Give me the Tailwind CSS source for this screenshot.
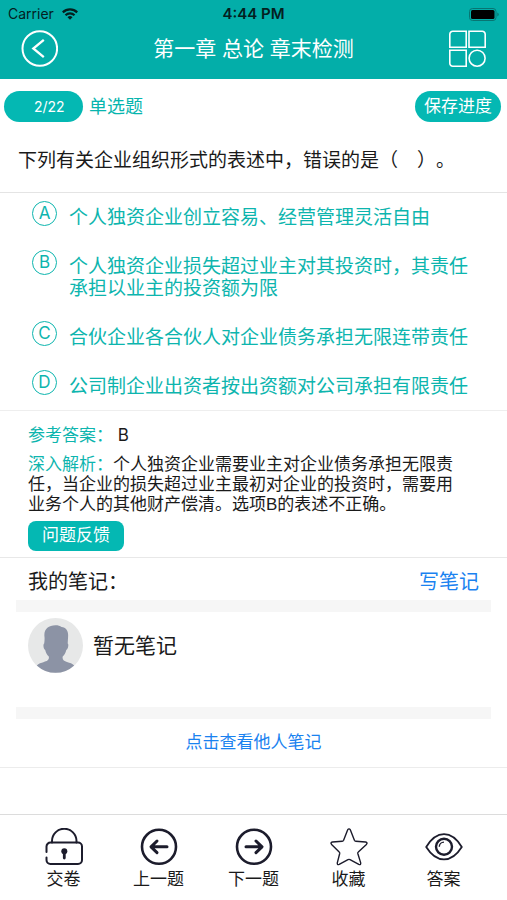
<!DOCTYPE html>
<html lang="zh-CN">
<head>
<meta charset="utf-8">
<meta name="viewport" content="width=device-width, initial-scale=1">
<title>第一章 总论 章末检测</title>
<script src="https://cdn.jsdelivr.net/npm/@tailwindcss/browser@4"></script>
</head>
<body class="flex min-h-screen flex-col bg-white font-['Liberation_Sans','Noto_Sans_CJK_SC',sans-serif] text-[17px] leading-5 text-[#1a1a1a] [text-spacing-trim:space-all]">

<header class="bg-[#03aea9] pb-[11px]">
  <div class="grid h-7 grid-cols-3 items-center px-2 font-['Inter',sans-serif] text-sm text-[#04201f]">
    <div class="flex items-center gap-2">
      <span>Carrier</span>
      <svg class="h-3 w-4" viewBox="0 0 16 12" fill="none" stroke="currentColor" stroke-width="2.2" aria-hidden="true">
        <path d="M.8 4.4a10.3 10.3 0 0 1 14.400 0"/>
        <path d="M3.500 7.200a6.400 6.400 0 0 1 9 0"/>
        <path d="M8 11.800 5.500 9.200a3.600 3.600 0 0 1 5 0z" fill="currentColor" stroke="none"/>
      </svg>
    </div>
    <span class="text-center text-[15px] font-semibold">4:44 PM</span>
    <svg class="h-[13px] w-[30px] justify-self-end" viewBox="0 0 30 13" aria-hidden="true">
      <rect x=".5" y=".5" width="26.500" height="12" rx="3" fill="none" stroke="#087572"/>
      <rect x="2" y="2" width="23.500" height="9" rx="1.500" fill="#000"/>
      <path d="M28.300 4.500q1.400.6 1.400 2t-1.400 2z" fill="#087572"/>
    </svg>
  </div>
  <div class="flex items-center justify-between px-5 pt-[2px] text-white">
    <button class="size-[38px]" aria-label="返回">
      <svg class="size-full" viewBox="0 0 38 38" fill="none" stroke="currentColor" stroke-width="2">
        <circle cx="19.800" cy="18.500" r="17.300"/>
        <path d="M23.800 9.800 13.300 18.500l10.500 8.700" stroke-width="2.300"/>
      </svg>
    </button>
    <h1 class="text-[21px] leading-7">第一章 总论 章末检测</h1>
    <button class="size-[38px]" aria-label="答题卡">
      <svg class="size-full" viewBox="0 0 38 38" fill="none" stroke="currentColor" stroke-width="1.600">
        <path d="M17.200 1.200V17.200H.8V4.200a3 3 0 0 1 3-3z"/>
        <path d="M20 1.200h13.200a3 3 0 0 1 3 3v13H20z"/>
        <path d="M.8 20.200h16.400v16H3.800a3 3 0 0 1-3-3z"/>
        <circle cx="28.100" cy="28.200" r="8"/>
      </svg>
    </button>
  </div>
</header>

<main class="flex-1">
  <section class="border-b border-[#e4e4e4]">
    <div class="flex items-center px-[6px] pt-3 pl-1 text-[#07b5ae]">
      <span class="h-[31px] w-[79px] rounded-full bg-[#04b8b3] pl-[30px] font-['Inter',sans-serif] text-sm leading-[31px] text-white">2/22</span>
      <span class="ml-[6px] flex-1 text-[18px]">单选题</span>
      <button class="h-[31px] w-[86px] rounded-full bg-[#04b8b3] text-white">保存进度</button>
    </div>
    <p class="px-[18px] pt-[29px] pb-[21px] text-[19px]">下列有关企业组织形式的表述中，错误的是（　）。</p>
  </section>

  <fieldset class="flex flex-col gap-[21px] border-b border-[#eee] pt-2 pr-6 pb-3 pl-8 text-[19px] leading-[22px] text-[#0db5ae]" aria-label="选项">
    <label class="grid grid-cols-[25px_1fr] items-start gap-x-3">
      <input type="radio" name="answer" value="A" class="col-start-1 row-start-1 size-[25px] appearance-none rounded-full border-[1.5px] border-current">
      <span class="col-start-1 row-start-1 text-center font-['Inter',sans-serif] text-[17px] leading-[25px]">A</span>
      <span class="pt-[6px]">个人独资企业创立容易、经营管理灵活自由</span>
    </label>
    <label class="grid grid-cols-[25px_1fr] items-start gap-x-3">
      <input type="radio" name="answer" value="B" class="col-start-1 row-start-1 size-[25px] appearance-none rounded-full border-[1.5px] border-current">
      <span class="col-start-1 row-start-1 text-center font-['Inter',sans-serif] text-[17px] leading-[25px]">B</span>
      <span class="pt-[6px]">个人独资企业损失超过业主对其投资时，其责任承担以业主的投资额为限</span>
    </label>
    <label class="grid grid-cols-[25px_1fr] items-start gap-x-3">
      <input type="radio" name="answer" value="C" class="col-start-1 row-start-1 size-[25px] appearance-none rounded-full border-[1.5px] border-current">
      <span class="col-start-1 row-start-1 text-center font-['Inter',sans-serif] text-[17px] leading-[25px]">C</span>
      <span class="pt-[6px]">合伙企业各合伙人对企业债务承担无限连带责任</span>
    </label>
    <label class="grid grid-cols-[25px_1fr] items-start gap-x-3">
      <input type="radio" name="answer" value="D" class="col-start-1 row-start-1 size-[25px] appearance-none rounded-full border-[1.5px] border-current">
      <span class="col-start-1 row-start-1 text-center font-['Inter',sans-serif] text-[17px] leading-[25px]">D</span>
      <span class="pt-[6px]">公司制企业出资者按出资额对公司承担有限责任</span>
    </label>
  </fieldset>

  <section class="border-b border-[#e8e8e8] px-7 pt-[14px] pb-[6px]">
    <p><span class="text-[#0db5ae]">参考答案：</span> <span class="font-['Inter',sans-serif]">B</span></p>
    <p class="mt-[9px] pr-[14px]"><span class="text-[#0db5ae]">深入解析：</span>个人独资企业需要业主对企业债务承担无限责任，当企业的损失超过业主最初对企业的投资时，需要用业务个人的其他财产偿清。选项B的表述不正确。</p>
    <button class="mt-[6px] block h-[30px] rounded-lg bg-[#04b8b3] px-[14px] text-white">问题反馈</button>
  </section>

  <section class="border-b border-[#ececec] px-4">
    <div class="flex h-[42px] items-center justify-between px-3 pt-[6px] text-[20px]">
      <h2>我的笔记：</h2>
      <a href="#write" class="text-[#1a82f0]">写笔记</a>
    </div>
    <div class="flex items-start gap-[10px] border-y-12 border-[#f6f6f6] px-3 pt-[6px] pb-[34px]">
      <svg class="size-[55px] shrink-0" viewBox="0 0 55 55" role="img" aria-label="头像">
        <circle cx="27.500" cy="27.500" r="27.500" fill="#e7e8e8"/>
        <path d="M16.500 19C15.500 11.500 20 7.300 27.500 7.300c2.600 0 4.600.6 6 1.800 4.700.4 7 4 6.600 9.400l-.4 7c1.200.5.600 5.500-1.400 6.500-.7 3-1.800 4.800-3.600 6.500-.7 3.500 1.300 4.700 4.300 5.500 3 .8 5.300 1.700 7.200 3.500A27.500 27.500 0 0 1 8.800 47.500c1.900-1.800 4.200-2.700 7.200-3.500 3-.8 5.500-2 4.800-5.500-1.800-1.700-2.900-3.500-3.600-6.500-2-1-2.200-6-1-6.500.3-2.500.5-4.500.3-6.500z" fill="#8c93a5"/>
      </svg>
      <p class="text-[21px] leading-[55px]">暂无笔记</p>
    </div>
    <div class="flex h-12 items-center justify-center">
      <a href="#others" class="text-[#1a82f0]">点击查看他人笔记</a>
    </div>
  </section>
</main>

<nav class="grid h-[86px] grid-cols-5 border-t border-[#dcdcdc] px-4 pt-[13px] text-[#1c1c2c]" aria-label="答题操作">
  <button class="flex flex-col items-center gap-1">
    <svg class="size-[38px]" viewBox="0 0 38 38" fill="none" stroke="currentColor" stroke-width="2" stroke-linecap="round">
      <path d="M7 14.500v-1.500a12 12 0 0 1 24.500 0v1.500"/>
      <path d="M1.500 24v-5.500a4 4 0 0 1 4-4H33a4 4 0 0 1 4 4V32a4 4 0 0 1-4 4H5.500a4 4 0 0 1-4-4v-2.500"/>
      <circle cx="19.300" cy="23.200" r="3" fill="currentColor" stroke="none"/>
      <path d="M19.300 24v6" stroke-width="2.800"/>
    </svg>
    <span class="text-[#1a1a1a]">交卷</span>
  </button>
  <button class="flex flex-col items-center gap-1">
    <svg class="size-[38px]" viewBox="0 0 38 38" fill="none" stroke="currentColor" stroke-width="2.600" stroke-linecap="round" stroke-linejoin="round">
      <circle cx="19" cy="18.800" r="17"/>
      <path d="M27 18.800H11.500M17 13l-6 5.800 6 5.800" stroke-width="3"/>
    </svg>
    <span class="text-[#1a1a1a]">上一题</span>
  </button>
  <button class="flex flex-col items-center gap-1">
    <svg class="size-[38px]" viewBox="0 0 38 38" fill="none" stroke="currentColor" stroke-width="2.600" stroke-linecap="round" stroke-linejoin="round">
      <circle cx="19" cy="18.800" r="17"/>
      <path d="M11 18.800h15.500M21 13l6 5.800-6 5.800" stroke-width="3"/>
    </svg>
    <span class="text-[#1a1a1a]">下一题</span>
  </button>
  <button class="flex flex-col items-center gap-1">
    <svg class="size-[38px]" viewBox="0 0 38 38" fill="none" stroke="currentColor" stroke-width="1.400" stroke-linejoin="round">
      <path d="M17.600 1.900q1.400-2 2.800 0l4 10.300q.4.900 1.400 1l9.800.8q2.400.5.800 2.400L28.300 24q-.7.600-.5 1.500l2.900 9.400q.3 2.400-1.900 1.500L20 31.600q-1-.5-2 0l-8.800 4.800q-2.200.9-1.900-1.500l2.400-9.400q.2-.9-.5-1.500L1.600 16.400q-1.600-1.900.8-2.400l9.800-.8q1-.1 1.400-1z"/>
    </svg>
    <span class="text-[#1a1a1a]">收藏</span>
  </button>
  <button class="flex flex-col items-center gap-1">
    <svg class="size-[38px]" viewBox="0 0 38 38" fill="none" stroke="currentColor" stroke-width="1.800" stroke-linejoin="round">
      <path d="M1.200 19Q9 6.200 19 6.200T36.800 19Q29 31.400 19 31.400T1.200 19z"/>
      <circle cx="19" cy="18.800" r="8" stroke-width="2.400"/>
      <path d="M14.300 18.800a4.700 4.700 0 0 1 4.700-4.700" stroke-width="1.400"/>
    </svg>
    <span class="text-[#1a1a1a]">答案</span>
  </button>
</nav>

</body>
</html>
